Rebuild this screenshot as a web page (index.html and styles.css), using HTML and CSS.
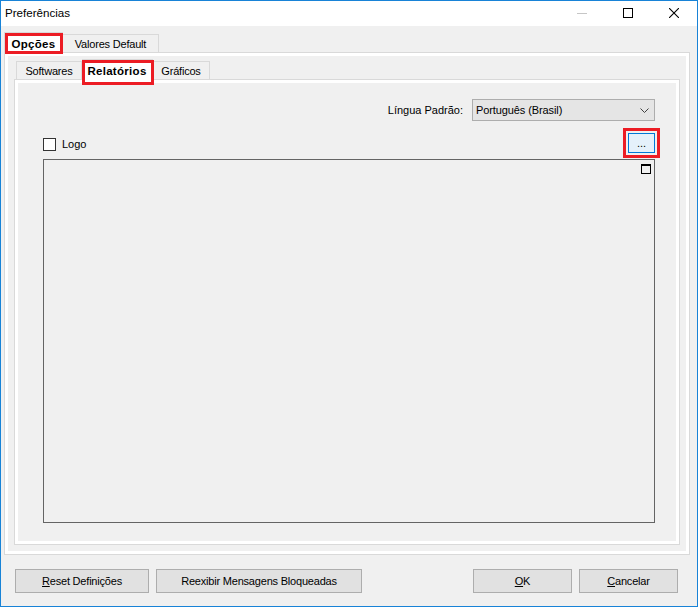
FILE: index.html
```html
<!DOCTYPE html>
<html lang="pt-BR">
<head>
  <meta charset="UTF-8" />
  <title>Preferências</title>
  <link rel="stylesheet" href="styles.css">
</head>
<body>

<div class="window">

  <!-- Title bar -->
  <div class="titlebar">
    <span class="title">Preferências</span>
    <div class="caption-buttons">
      <span class="cap-btn">
        <svg width="10" height="10" viewBox="0 0 10 10"><line x1="0" y1="5.5" x2="10" y2="5.5" stroke="#c6c6c6" stroke-width="1"/></svg>
      </span>
      <span class="cap-btn">
        <svg width="10" height="10" viewBox="0 0 10 10"><rect x="0.5" y="0.5" width="9" height="9" fill="none" stroke="#000" stroke-width="1"/></svg>
      </span>
      <span class="cap-btn">
        <svg width="10" height="10" viewBox="0 0 10 10"><path d="M0 0 L10 10 M10 0 L0 10" stroke="#000" stroke-width="1.1"/></svg>
      </span>
    </div>
  </div>

  <div class="client">

    <!-- Outer tabs -->
    <div class="tabs outer-tabs">
      <div class="tabstrip">
        <div class="tab selected tab-opcoes marked">Opções</div>
        <div class="tab tab-valores">Valores Default</div>
      </div>
      <div class="tabpanel">
        <div class="tabpage outer-page">

          <!-- Inner tabs -->
          <div class="tabs inner-tabs">
            <div class="tabstrip">
              <div class="tab tab-softwares">Softwares</div>
              <div class="tab selected tab-relatorios marked">Relatórios</div>
              <div class="tab tab-graficos">Gráficos</div>
            </div>
            <div class="tabpanel">
              <div class="tabpage report-page">

                <div class="lang-row">
                  <span class="lang-label">Língua Padrão:</span>
                  <div class="combo">
                    <span>Português (Brasil)</span>
                    <svg width="9" height="5" viewBox="0 0 9 5"><polyline points="0.5,0.5 4.5,4.5 8.5,0.5" fill="none" stroke="#404040" stroke-width="1"/></svg>
                  </div>
                </div>

                <div class="logo-row">
                  <label class="check"><span class="check-box"></span>Logo</label>
                  <button class="browse-btn marked">...</button>
                </div>

                <div class="picture">
                  <span class="max-glyph"></span>
                </div>

              </div>
            </div>
          </div>

        </div>
      </div>
    </div>

    <!-- Bottom buttons -->
    <div class="button-bar">
      <button class="btn btn-reset"><u>R</u>eset Definições</button>
      <button class="btn btn-reexibir">Reexibir Mensagens Bloqueadas</button>
      <span class="spacer"></span>
      <button class="btn btn-ok"><u>O</u>K</button>
      <button class="btn btn-cancel"><u>C</u>ancelar</button>
    </div>

  </div>
</div>

</body>
</html>
```

FILE: styles.css
```css
body {
  margin: 0;
  font-family: "Liberation Sans", Arial, sans-serif;
  font-size: 11px;
  color: #000;
  background-color: #ffffff;
}

.window {
  width: 698px;
  height: 607px;
  box-sizing: border-box;
  border: 1px solid #1883d7;
  background-color: #f0f0f0;
  display: flex;
  flex-direction: column;
}

/* Title bar */
.titlebar {
  height: 25px;
  background-color: #ffffff;
  display: flex;
  align-items: center;
  justify-content: space-between;
  padding-left: 4px;
}

.title {
  font-size: 11.6px;
  margin-top: -2px;
}

.caption-buttons {
  display: flex;
  height: 25px;
  margin-top: -1px;
}

.cap-btn {
  width: 46px;
  display: flex;
  align-items: center;
  justify-content: center;
}

/* Client area */
.client {
  flex: 1;
  display: flex;
  flex-direction: column;
  padding: 6px 7px 0 3px;
}

/* Tab controls */
.tabs {
  display: flex;
  flex-direction: column;
}

.tabstrip {
  display: flex;
  align-items: flex-end;
  height: 20px;
}

.tab {
  box-sizing: border-box;
  height: 18px;
  border: 1px solid #d9d9d9;
  border-bottom: none;
  background-color: #f0f0f0;
  display: flex;
  align-items: center;
  justify-content: center;
  letter-spacing: -0.2px;
  white-space: nowrap;
}

.tab + .tab {
  border-left: none;
}

.tab.selected {
  position: relative;
  z-index: 1;
  height: 21px;
  margin-bottom: -1px;
  background-color: #ffffff;
  font-weight: bold;
  font-size: 11.5px;
  letter-spacing: 0.3px;
  padding-top: 1px;
}

.tab.selected + .tab {
  border-left: none;
}

.tabpanel {
  box-sizing: border-box;
  border: 1px solid #d9d9d9;
  background-color: #ffffff;
  padding: 3px;
}

.tabpage {
  background-color: #f0f0f0;
  height: 100%;
  box-sizing: border-box;
}

/* Outer tabs */
.outer-tabs .tabpanel {
  width: 686px;
  height: 503px;
}

.tab-opcoes { width: 59px; }
.tab-valores { width: 96px; padding-top: 1px; }

.outer-page {
  padding: 3px 6px 6px 6px;
}

/* Inner tabs */
.inner-tabs .tabstrip {
  padding-left: 2px;
}

.inner-tabs .tabpanel {
  width: 666px;
  height: 466px;
}

.tab-softwares { width: 66px; padding-top: 1px; }
.tab-relatorios { width: 71px; }
.tab-graficos { width: 57px; padding-top: 1px; }

.tab-relatorios,
.tab-graficos {
  border-left: 1px solid #d9d9d9;
}

/* Red annotation boxes */
.marked {
  position: relative;
}

.marked::after {
  content: "";
  position: absolute;
  border: 3px solid #ec1c24;
  pointer-events: none;
}

.tab-opcoes::after {
  left: 0;
  top: 0;
  right: -1px;
  bottom: -1px;
}

.tab-relatorios::after {
  left: 0;
  top: 0;
  right: -2px;
  bottom: -5px;
}

.browse-btn::after {
  left: -6px;
  top: -6px;
  right: -6px;
  bottom: -6px;
}

/* Report page */
.report-page {
  padding: 16px 21px 0 25px;
}

.lang-row {
  display: flex;
  justify-content: flex-end;
  align-items: center;
  gap: 9px;
  height: 22px;
}

.combo {
  box-sizing: border-box;
  width: 183px;
  height: 22px;
  border: 1px solid #adadad;
  background-color: #e5e5e5;
  display: flex;
  align-items: center;
  justify-content: space-between;
  padding: 0 5px 0 3px;
  letter-spacing: -0.1px;
}

.logo-row {
  margin-top: 12px;
  height: 20px;
  display: flex;
  align-items: center;
  justify-content: space-between;
}

.check {
  display: flex;
  align-items: center;
  gap: 6px;
  padding-top: 2px;
}

.check-box {
  box-sizing: border-box;
  width: 13px;
  height: 13px;
  border: 1px solid #333333;
  background-color: #ffffff;
}

.browse-btn {
  box-sizing: border-box;
  width: 27px;
  height: 20px;
  border: 1px solid #0078d7;
  background-color: #e5f1fb;
  font-family: "Liberation Sans", Arial, sans-serif;
  font-size: 11px;
  padding: 0;
  color: #000;
}

.picture {
  position: relative;
  box-sizing: border-box;
  margin-top: 6px;
  height: 364px;
  border: 1px solid #646464;
}

.max-glyph {
  position: absolute;
  top: 4px;
  right: 3px;
  width: 10px;
  height: 10px;
  box-sizing: border-box;
  border: 1px solid #000;
  border-top-width: 2px;
}

/* Bottom buttons */
.button-bar {
  display: flex;
  gap: 7px;
  margin: 14px 12px 0 11px;
}

.spacer {
  flex: 1;
}

.btn {
  box-sizing: border-box;
  height: 24px;
  border: 1px solid #adadad;
  background-color: #e1e1e1;
  font-family: "Liberation Sans", Arial, sans-serif;
  font-size: 11px;
  letter-spacing: -0.2px;
  color: #000;
  padding: 0;
}

.btn-reset { width: 134px; }
.btn-reexibir { width: 206px; }
.btn-ok { width: 99px; }
.btn-cancel { width: 99px; }
```
